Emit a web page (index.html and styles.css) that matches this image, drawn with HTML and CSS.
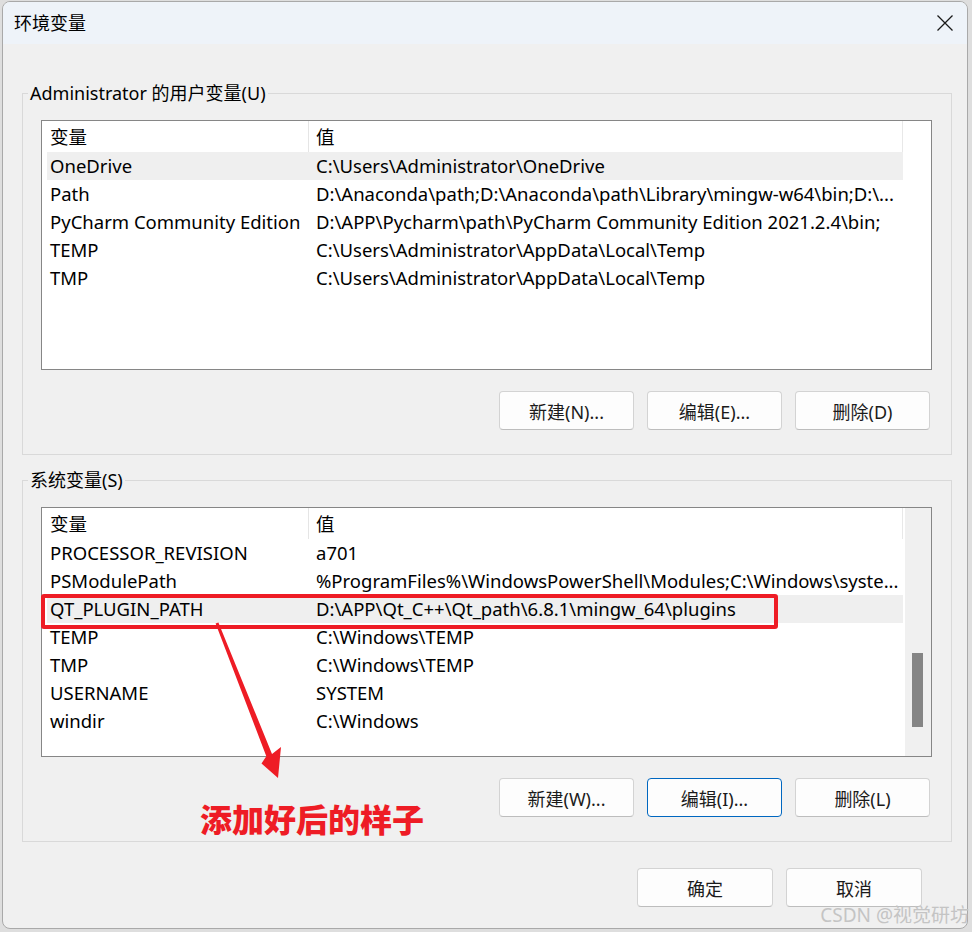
FILE: index.html
```html
<!DOCTYPE html>
<html lang="zh-CN">
<head>
<meta charset="utf-8">
<title>环境变量</title>
<link rel="stylesheet" href="styles.css">
</head>
<body>
<div class="window">
  <div class="titlebar">
    <span class="title">环境变量</span>
    <svg class="close" width="16" height="16" viewBox="0 0 16 16"><path d="M0.5 0.5L15.5 15.5M15.5 0.5L0.5 15.5" stroke="#1a1a1a" stroke-width="1.3" fill="none"/></svg>
  </div>
  <div class="content">
    <fieldset class="group">
      <legend>Administrator 的用户变量(U)</legend>
      <div class="list">
        <div class="rows">
          <div class="row head"><span class="c1">变量</span><span class="c2">值</span></div>
          <div class="row sel"><span class="c1">OneDrive</span><span class="c2">C:\Users\Administrator\OneDrive</span></div>
          <div class="row"><span class="c1">Path</span><span class="c2">D:\Anaconda\path;D:\Anaconda\path\Library\mingw-w64\bin;D:\...</span></div>
          <div class="row"><span class="c1">PyCharm Community Edition</span><span class="c2">D:\APP\Pycharm\path\PyCharm Community Edition 2021.2.4\bin;</span></div>
          <div class="row"><span class="c1">TEMP</span><span class="c2">C:\Users\Administrator\AppData\Local\Temp</span></div>
          <div class="row"><span class="c1">TMP</span><span class="c2">C:\Users\Administrator\AppData\Local\Temp</span></div>
        </div>
        <div class="gutter"></div>
      </div>
      <div class="btns">
        <button class="btn">新建(N)...</button>
        <button class="btn">编辑(E)...</button>
        <button class="btn">删除(D)</button>
      </div>
    </fieldset>

    <fieldset class="group group2">
      <legend>系统变量(S)</legend>
      <div class="list">
        <div class="rows">
          <div class="row head"><span class="c1">变量</span><span class="c2">值</span></div>
          <div class="row"><span class="c1">PROCESSOR_REVISION</span><span class="c2">a701</span></div>
          <div class="row"><span class="c1">PSModulePath</span><span class="c2">%ProgramFiles%\WindowsPowerShell\Modules;C:\Windows\syste...</span></div>
          <div class="row sel"><span class="c1">QT_PLUGIN_PATH</span><span class="c2">D:\APP\Qt_C++\Qt_path\6.8.1\mingw_64\plugins</span></div>
          <div class="row"><span class="c1">TEMP</span><span class="c2">C:\Windows\TEMP</span></div>
          <div class="row"><span class="c1">TMP</span><span class="c2">C:\Windows\TEMP</span></div>
          <div class="row"><span class="c1">USERNAME</span><span class="c2">SYSTEM</span></div>
          <div class="row"><span class="c1">windir</span><span class="c2">C:\Windows</span></div>
        </div>
        <div class="gutter track"><div class="thumb"></div></div>
      </div>
      <div class="btns">
        <button class="btn">新建(W)...</button>
        <button class="btn focus">编辑(I)...</button>
        <button class="btn">删除(L)</button>
      </div>
    </fieldset>

    <div class="dlg-btns">
      <button class="btn wide">确定</button>
      <button class="btn wide">取消</button>
    </div>
  </div>
</div>

<div class="mark-box"></div>
<svg class="arrow" width="972" height="932" viewBox="0 0 972 932">
  <polygon points="215.6,623.6 218.4,622.4 272,754 281,747 278,778 261.5,763.5 266.3,756.2" fill="#ee1c25"/>
</svg>
<div class="note">添加好后的样子</div>
<div class="watermark">CSDN @视觉研坊</div>
</body>
</html>
```

FILE: styles.css
```css
* { box-sizing: border-box; }
html, body { margin: 0; padding: 0; }
body {
  position: relative;
  width: 972px;
  height: 932px;
  overflow: hidden;
  background: #dedede;
  font-family: "Noto Sans", "Noto Sans CJK SC", sans-serif;
  color: #000;
}
.window {
  margin: 1px 0 0 2px;
  width: 966px;
  height: 928px;
  background: #f0f0f0;
  border: 1px solid #a9a9a9;
  border-radius: 8px;
  overflow: hidden;
  display: flex;
  flex-direction: column;
}
.titlebar {
  flex: none;
  height: 42px;
  background: #eef3f9;
  display: flex;
  align-items: center;
  justify-content: space-between;
  padding: 0 14px 0 11px;
}
.title { font-size: 18px; line-height: 24px; }
.close { display: block; }
.content {
  flex: 1;
  padding-top: 37px;
}
.group {
  margin: 0 0 0 19px;
  width: 930px;
  border: 1px solid #d9d9d9;
  padding: 15px 19px 24px 18px;
  min-width: 0;
}
.group2 { margin-top: 13px; }
.group legend {
  font-size: 18px;
  line-height: 24px;
  padding: 0 2px;
  margin-left: -13px;
}
.list {
  height: 250px;
  border: 1px solid #868686;
  background: #fff;
  display: flex;
}
.rows {
  flex: none;
  width: 861px;
  padding-left: 5px;
}
.row {
  display: flex;
  height: 28px;
  line-height: 28px;
  font-size: 18.5px;
  white-space: nowrap;
  overflow: hidden;
}
.row.head {
  height: 31px;
  line-height: 31px;
  border-right: 1px solid #e8e8e8;
}
.row.sel { background: #efefef; }
.c1 {
  flex: none;
  width: 262px;
  padding-left: 3px;
  overflow: hidden;
}
.head .c1 { border-right: 1px solid #e5e5e5; }
.c2 {
  flex: 1;
  padding-left: 7px;
  overflow: hidden;
}
.gutter { flex: none; width: 28px; }
.track {
  background: #f0f0f0;
  border-left: 2px solid #fff;
  padding: 145px 0 0 7px;
}
.thumb {
  width: 11px;
  height: 74px;
  background: #858585;
}
.btns {
  display: flex;
  justify-content: flex-end;
  gap: 13px;
  margin: 21px 2px 0 0;
}
.btn {
  width: 135px;
  height: 39px;
  background: #fdfdfd;
  border: 1px solid #d3d3d3;
  border-bottom-color: #bdbdbd;
  border-radius: 4px;
  font-family: "Noto Sans", "Noto Sans CJK SC", sans-serif;
  font-size: 18px;
  color: #1b1b1b;
  padding: 0;
}
.btn.focus { border-color: #0067c0; }
.dlg-btns {
  display: flex;
  justify-content: flex-end;
  gap: 13px;
  margin: 26px 45px 0 0;
}
.btn.wide { width: 136px; }

/* annotations */
.mark-box {
  position: absolute;
  left: 41px;
  top: 594px;
  width: 737px;
  height: 35px;
  border: 4px solid #ee1c25;
  border-radius: 3px;
}
.arrow {
  position: absolute;
  left: 0;
  top: 0;
  pointer-events: none;
}
.note {
  position: absolute;
  left: 200px;
  top: 800px;
  font-family: "Noto Sans CJK SC", sans-serif;
  font-weight: 900;
  font-size: 32px;
  line-height: 36px;
  color: #ee1c25;
}
.watermark {
  position: absolute;
  right: 3px;
  bottom: 5px;
  font-family: "Noto Sans", "Noto Sans CJK SC", sans-serif;
  font-size: 19px;
  line-height: 24px;
  color: #c4c4c4;
}
```
